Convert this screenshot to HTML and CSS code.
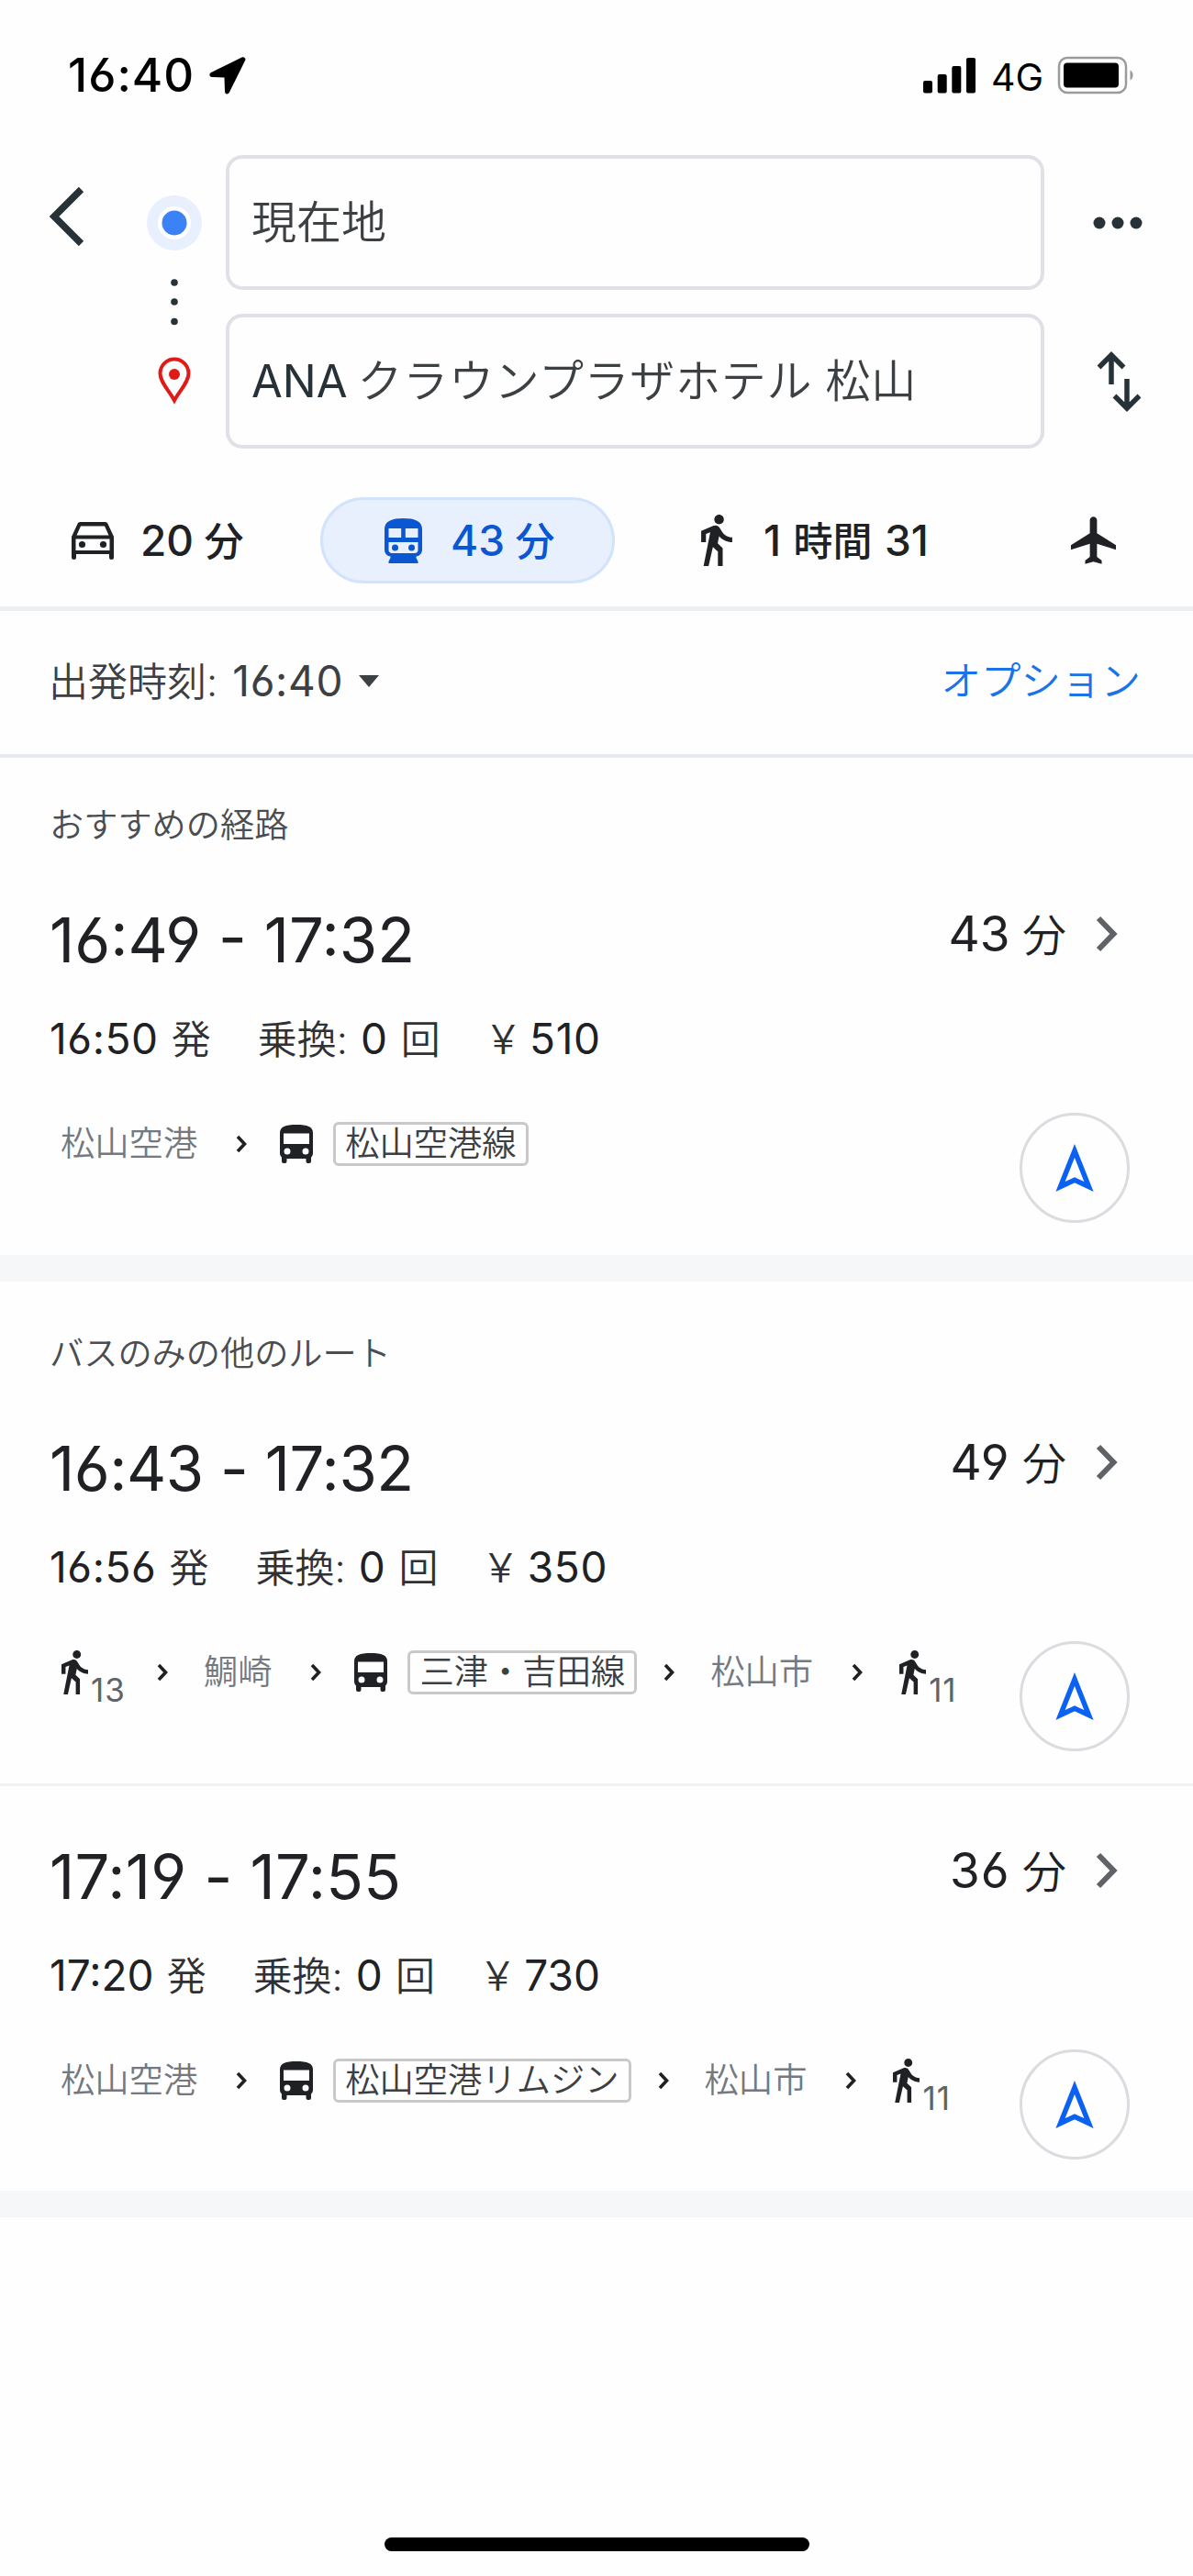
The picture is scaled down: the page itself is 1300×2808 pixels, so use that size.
FILE: index.html
```html
<!DOCTYPE html>
<html lang="ja">
<head>
<meta charset="utf-8">
<title>経路</title>
<link rel="stylesheet" href="styles.css">
</head>
<body>
<svg class="defs" width="0" height="0" aria-hidden="true">
  <symbol id="walk" viewBox="6 1.5 13 21.5"><path d="M13.5 5.5c1.1 0 2-.9 2-2s-.9-2-2-2-2 .9-2 2 .9 2 2 2zM9.8 8.9L7 23h2.1l1.8-8 2.1 2v6h2v-7.5l-2.1-2 .6-3C14.8 12 16.8 13 19 13v-2c-1.9 0-3.5-1-4.3-2.4l-1-1.6c-.4-.6-1-1-1.7-1-.3 0-.5.1-.8.1L6 8.3V13h2V9.6l1.8-.7"/></symbol>
  <symbol id="bus" viewBox="0 0 36 42"><path fill-rule="evenodd" d="M0 9C0 2 6 0 18 0s18 2 18 9v22c0 2-1 3.500-2 4.500V40a2 2 0 0 1-2 2h-1.500a2 2 0 0 1-2-2v-3h-21v3a2 2 0 0 1-2 2H4a2 2 0 0 1-2-2v-4.500C1 34.500 0 33 0 31zM4 9.500V21h28V9.500zM8 25.500a3.500 3.500 0 1 0 0 7 3.500 3.500 0 0 0 0-7zm20 0a3.500 3.500 0 1 0 0 7 3.500 3.500 0 0 0 0-7z"/></symbol>
  <symbol id="sep" viewBox="0 0 12 20"><path d="M2 2l7.500 8L2 18" fill="none" stroke="currentColor" stroke-width="3.600"/></symbol>
  <symbol id="more" viewBox="0 0 24 40"><path d="M3 3l16.500 17L3 37" fill="none" stroke="currentColor" stroke-width="6"/></symbol>
  <symbol id="nav" viewBox="0 0 42 53"><path d="M21 8.500L36.500 47.500 21 40.300 5.500 47.500z" fill="none" stroke="currentColor" stroke-width="5.500"/></symbol>
</svg>

<header class="status">
  <span class="clock">16:40</span>
  <svg class="locate" width="40" height="41" viewBox="0 0 40 41"><path d="M35.500.500L2 17c-2.500 1.500-2 5 1 5l13.500.500.500 15c0 3.500 3.500 4 5 1L39.300 3.500c.8-2-1.500-4-3.800-3z"/></svg>
  <svg class="signal" width="57" height="39" viewBox="0 0 57 39"><rect y="25" width="10" height="13.500" rx="2"/><rect x="15.700" y="18" width="10" height="20.500" rx="2"/><rect x="31.300" y="9" width="10" height="29.500" rx="2"/><rect x="47" width="10" height="38.500" rx="2"/></svg>
  <span class="network">4G</span>
  <svg class="battery" width="84" height="42" viewBox="0 0 84 42"><rect x="2" y="2" width="73" height="38" rx="9" fill="none" stroke="#9b9b9b" stroke-width="2.500"/><rect x="7" y="7.500" width="60" height="27" rx="4"/><path d="M79.500 15.500c4 2 4 9 0 11z" fill="#9b9b9b"/></svg>
</header>

<section class="search">
  <svg class="back" width="40" height="66" viewBox="0 0 40 66"><path d="M35.500 3.500L6 33l29.500 29.500" fill="none" stroke="currentColor" stroke-width="7.500"/></svg>
  <svg class="rail" width="60" height="320" viewBox="0 0 60 320">
    <circle cx="30" cy="74" r="30" fill="#e8f0fe"/><circle cx="30" cy="74" r="18" fill="#fff"/><circle cx="30" cy="74" r="13.500" fill="#3b82f6"/>
    <circle cx="30" cy="139" r="3.800"/><circle cx="30" cy="160" r="3.800"/><circle cx="30" cy="181.500" r="3.800"/>
    <path d="M30 267.500C24.500 257 14.500 248 14.500 238a15.500 15.500 0 0 1 31 0c0 10-10 19-15.500 29.500z" fill="none" stroke="#e01b17" stroke-width="4"/><circle cx="30" cy="239" r="6" fill="#e01b17"/>
  </svg>
  <div class="fields">
    <div class="field">現在地</div>
    <div class="field"><span class="ana">ANA</span><span class="hotel">クラウンプラザホテル 松山</span></div>
  </div>
  <div class="actions">
    <svg width="54" height="147" viewBox="0 0 54 147"><circle cx="7" cy="74" r="6.500"/><circle cx="27" cy="74" r="6.500"/><circle cx="47" cy="74" r="6.500"/></svg>
    <svg width="54" height="147" viewBox="0 0 54 147"><path d="M20 77V45M6.500 58.500L20 45l13.500 13.500M37 71v32M23.500 89.500L37 103l13.500-13.500" fill="none" stroke="currentColor" stroke-width="5.500"/></svg>
  </div>
</section>

<nav class="modes">
  <div class="mode car">
    <svg width="46" height="41" viewBox="0 0 46 41"><path fill-rule="evenodd" d="M9.500 0h27c1.500 0 2.500.8 3 2L46 16v22.500a2.500 2.500 0 0 1-5 0V35H5v3.500a2.500 2.500 0 0 1-5 0V16L6.500 2c.5-1.200 1.500-2 3-2zM10 4.500L5.500 14.500h35L36 4.500zM4.500 18.500V31h37V18.500z"/><circle cx="11.500" cy="24.500" r="3.600"/><circle cx="34.500" cy="24.500" r="3.600"/></svg>
    <span><span class="num">20</span> 分</span>
  </div>
  <div class="mode transit">
    <svg width="41" height="49" viewBox="0 0 41 49"><path fill-rule="evenodd" d="M0 12C0 3 8 0 20.500 0S41 3 41 12v22c0 4-2.500 7-6.500 7.500V43l2 4v2h-32v-2l2-4v-1.500C2.500 41 0 38 0 34zM4.500 11v10h13.700V11zm18.300 0v10h13.700V11zM4.500 26v8.500c0 2 1.500 3.500 3.500 3.500h25c2 0 3.500-1.500 3.500-3.500V26z"/><circle cx="11.500" cy="32" r="3.500"/><circle cx="29.500" cy="32" r="3.500"/></svg>
    <span><span class="num">43</span> 分</span>
  </div>
  <div class="mode foot">
    <svg width="34" height="56"><use href="#walk"/></svg>
    <span><span class="num">1</span> 時間 <span class="num">31</span></span>
  </div>
  <svg class="plane" width="49" height="52" viewBox="2 2 19 20"><path d="M21 16v-2l-8-5V3.500c0-.83-.67-1.500-1.500-1.500S10 2.670 10 3.500V9l-8 5v2l8-2.500V19l-2 1.500V22l3.500-1 3.500 1v-1.500L13 19v-5.500l8 2.500z"/></svg>
</nav>

<div class="depart">
  <span class="when">出発時刻: <span class="num">16:40</span></span>
  <svg class="caret" width="22" height="13" viewBox="0 0 22 13"><path d="M0 0h22L11 13z"/></svg>
  <span class="options">オプション</span>
</div>

<section class="group">
  <h2>おすすめの経路</h2>
  <article class="route">
    <div class="top"><span class="time">16:49 - 17:32</span><span class="dur"><span class="num">43</span> 分</span><svg class="go" width="24" height="40"><use href="#more"/></svg></div>
    <div class="info"><span><span class="num">16:50</span> 発</span><span>乗換: <span class="num">0</span> 回</span><span class="fare"><span class="yen">¥</span> <span class="num">510</span></span></div>
    <div class="bottom">
      <div class="steps"><span class="stop first">松山空港</span><svg class="sep" width="12" height="20"><use href="#sep"/></svg><svg class="bus" width="36" height="42"><use href="#bus"/></svg><span class="line">松山空港線</span></div>
      <div class="start"><svg width="42" height="53"><use href="#nav"/></svg></div>
    </div>
  </article>
</section>

<section class="group others">
  <h2>バスのみの他のルート</h2>
  <article class="route">
    <div class="top"><span class="time">16:43 - 17:32</span><span class="dur"><span class="num">49</span> 分</span><svg class="go" width="24" height="40"><use href="#more"/></svg></div>
    <div class="info"><span><span class="num">16:56</span> 発</span><span>乗換: <span class="num">0</span> 回</span><span class="fare"><span class="yen">¥</span> <span class="num">350</span></span></div>
    <div class="bottom">
      <div class="steps"><svg class="walk first" width="29" height="48"><use href="#walk"/></svg><span class="mins">13</span><svg class="sep" width="12" height="20"><use href="#sep"/></svg><span class="stop">鯛崎</span><svg class="sep" width="12" height="20"><use href="#sep"/></svg><svg class="bus" width="36" height="42"><use href="#bus"/></svg><span class="line">三津・吉田線</span><svg class="sep" width="12" height="20"><use href="#sep"/></svg><span class="stop">松山市</span><svg class="sep" width="12" height="20"><use href="#sep"/></svg><svg class="walk" width="29" height="48"><use href="#walk"/></svg><span class="mins">11</span></div>
      <div class="start"><svg width="42" height="53"><use href="#nav"/></svg></div>
    </div>
  </article>
  <article class="route">
    <div class="top"><span class="time">17:19 - 17:55</span><span class="dur"><span class="num">36</span> 分</span><svg class="go" width="24" height="40"><use href="#more"/></svg></div>
    <div class="info"><span><span class="num">17:20</span> 発</span><span>乗換: <span class="num">0</span> 回</span><span class="fare"><span class="yen">¥</span> <span class="num">730</span></span></div>
    <div class="bottom">
      <div class="steps"><span class="stop first">松山空港</span><svg class="sep" width="12" height="20"><use href="#sep"/></svg><svg class="bus" width="36" height="42"><use href="#bus"/></svg><span class="line">松山空港リムジン</span><svg class="sep" width="12" height="20"><use href="#sep"/></svg><span class="stop">松山市</span><svg class="sep" width="12" height="20"><use href="#sep"/></svg><svg class="walk" width="29" height="48"><use href="#walk"/></svg><span class="mins">11</span></div>
      <div class="start"><svg width="42" height="53"><use href="#nav"/></svg></div>
    </div>
  </article>
</section>

<footer class="home"><div class="bar"></div></footer>
</body>
</html>
```
FILE: styles.css
```css
* { box-sizing: border-box; }
body {
  margin: 0;
  width: 1300px;
  height: 2808px;
  display: flex;
  flex-direction: column;
  background: #fefefe;
  color: #202124;
  font-family: Inter, "Noto Sans CJK JP", sans-serif;
  font-feature-settings: "cv03", "cv04";
  white-space: nowrap;
}
svg { display: block; flex: none; fill: currentColor; }
.defs { position: absolute; }

.status { display: flex; align-items: center; height: 164px; color: #000; padding-left: 74px; }
.clock { width: 154px; font-size: 51px; font-weight: 550; letter-spacing: 1px; line-height: 60px; }
.signal { margin-left: 738px; }
.network { width: 72px; margin-left: 17px; font-size: 41px; line-height: 60px; padding-top: 4px; }

.search { display: flex; padding-top: 5px; height: 325px; color: #263238; }
.back { margin: 34px 0 0 53px; }
.rail { margin-left: 67px; }
.fields { display: flex; flex-direction: column; gap: 26px; width: 892px; margin-left: 26px; }
.field {
  height: 147px;
  border: 4px solid #dfe1e6;
  border-radius: 18px;
  padding-left: 24px;
  color: #3c4043;
  font-size: 49px;
  font-weight: 350;
  line-height: 139px;
}
.ana { margin-right: 11px; font-weight: 400; color: #263238; }
.hotel { letter-spacing: .7px; }
.actions { display: flex; flex-direction: column; gap: 26px; margin-left: 53px; }

.modes { display: flex; height: 177px; padding-top: 53px; border-bottom: 5px solid #eceff2; font-size: 43px; line-height: 94px; }
.mode { display: flex; align-items: center; height: 94px; font-weight: 500; }
.mode .num { font-size: 46px; font-weight: 450; }
.car { width: 271px; margin-left: 78px; gap: 29px; }
.transit { width: 321px; padding-left: 67px; gap: 31px; border: 3px solid #d2e3fc; border-radius: 47px; background: #e8effd; color: #0b57d0; }
.foot { width: 403px; margin-left: 94px; gap: 34px; word-spacing: 2px; }
.plane { margin: 21px 0 0; }

.depart { display: flex; align-items: center; height: 160px; padding: 0 57px 4px 53px; border-bottom: 4px solid #e6e9ed; color: #3c4043; font-size: 43px; font-weight: 350; line-height: 60px; }
.num { font-weight: 400; }
.depart .num { margin-left: 4px; font-size: 46px; letter-spacing: .7px; }
.caret { margin-left: 17px; }
.options { margin-left: auto; font-size: 43.500px; color: #1a73e8; }

.group { padding-top: 44px; border-bottom: 29px solid #f5f7f9; }
.others { padding-top: 49px; }
h2 { margin: 0; padding-left: 54px; font-size: 37.200px; font-weight: 350; line-height: 60px; color: #4a4d51; }
.route { padding: 54px 69px 35px 53px; }
.route + .route { border-top: 3px solid #eff1f3; padding-top: 58px; padding-bottom: 34px; }
.top { display: flex; align-items: center; height: 80px; }
.time { font-size: 67px; padding-left: 1px; }
.others .time { letter-spacing: -.5px; }
.route + .route .time { letter-spacing: .2px; }
.dur { height: 60px; margin: 0 32px 12px auto; font-size: 48px; font-weight: 350; line-height: 60px; }
.dur .num { font-size: 53px; }
.others .dur .num { letter-spacing: 1px; }
.go { margin: 0 13px 12px 0; color: #5f6368; }
.info { display: flex; gap: 51px; height: 60px; padding-left: 1px; margin-top: 38px; font-size: 43px; font-weight: 350; line-height: 60px; word-spacing: 2px; color: #303134; }
.info .num { font-size: 46px; letter-spacing: .6px; color: #202124; }
.route + .route .info .num { letter-spacing: 0; }
.info .fare { margin-left: 4px; word-spacing: 3px; }
.yen { display: inline-block; transform: scaleX(1.15); transform-origin: left; margin-right: 4px; }
.bottom { display: flex; justify-content: space-between; margin-top: 51px; }
.steps { display: flex; align-items: center; height: 68px; font-size: 37.300px; font-weight: 350; line-height: 48px; }
.stop { margin-left: 39px; color: #74797f; }
.stop.first { margin-left: 13px; }
.sep { margin-left: 42px; }
.line + .sep { margin-left: 29px; }
.mins + .sep { margin-left: 34px; }
.bus { margin-left: 36px; }
.walk { margin: 0 0 0 40px; }
.walk.first { margin-left: 14px; }
.mins { margin: 38px 0 0 3px; font-size: 35px; font-weight: 400; line-height: 1; letter-spacing: 1px; color: #5f6368; }
.line { margin-left: 22px; padding: 0 10px; height: 48px; line-height: 42px; border: 3px solid #c9c9c9; border-radius: 6px; color: #3c4043; }
.start { display: flex; align-items: center; justify-content: center; width: 120px; height: 120px; border: 3px solid #dadce0; border-radius: 50%; color: #0b62f2; }
.start svg { margin-bottom: 2px; }

.home { display: flex; justify-content: center; align-items: flex-end; flex: 1; padding-bottom: 27px; }
.bar { width: 463px; height: 15px; border-radius: 8px; background: #000; }
```
